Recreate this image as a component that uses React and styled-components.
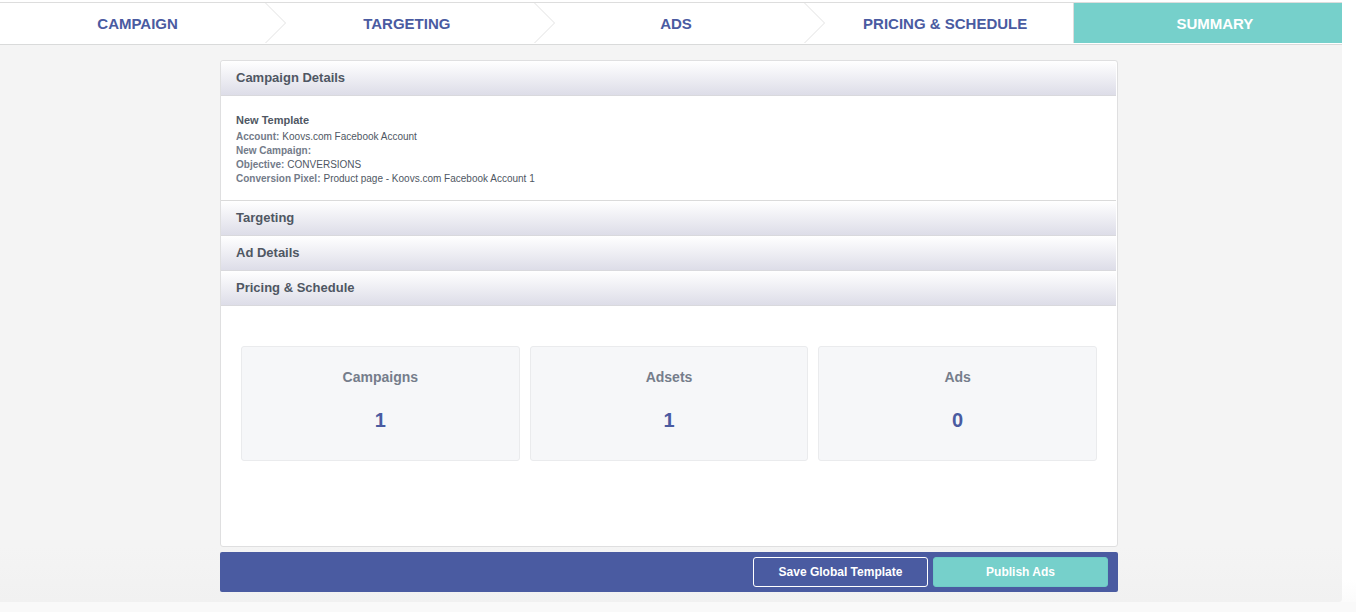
import React from "react";
import styled, { createGlobalStyle } from "styled-components";

const GlobalStyle = createGlobalStyle`
  * { box-sizing: border-box; }
  body {
    margin: 0;
    background: linear-gradient(#ffffff 0, #ffffff 580px, #f9f9f9 612px) no-repeat #f9f9f9;
    font-family: "Liberation Sans", Arial, Helvetica, sans-serif;
    color: #4f5763;
  }
  h2, h3, p, dl, dt, dd, ol { margin: 0; padding: 0; }
`;

const Page = styled.div`
  margin-right: 14px;
  padding-top: 2px;
  overflow: hidden;
`;

const StepBar = styled.nav`
  border-top: 1px solid #dddddd;
  border-bottom: 1px solid #d9dada;
  background: #ffffff;
  overflow: hidden;
`;

const StepList = styled.ol`
  display: grid;
  grid-template-columns: repeat(5, 1fr);
  margin: 0 0 1px -4px;
  list-style: none;
`;

const Step = styled.li`
  position: relative;
  height: 40px;
  border-left: ${(p) => (p.$active ? "1px solid #dddddd" : "0")};
  background: ${(p) => (p.$active ? "#76d0cb" : "#ffffff")};
`;

const StepLink = styled.a`
  display: block;
  padding-left: 14px;
  line-height: 41px;
  font-size: 15px;
  font-weight: bold;
  text-align: center;
  text-decoration: none;
  text-transform: uppercase;
  color: ${(p) => (p.$active ? "#ffffff" : "#4a5ba1")};
`;

const Chevron = styled.svg`
  position: absolute;
  left: 0;
  top: 0;
  width: 22px;
  height: 40px;
  fill: none;
  stroke: #e2e2e2;
`;

const Stage = styled.main`
  padding: 15px 4px 10px 0;
  background: linear-gradient(#f4f4f4 90%, #f1f1f1);
  border-bottom-right-radius: 3px;
`;

const Content = styled.div`
  max-width: 898px;
  margin: 0 auto;
`;

const Card = styled.section`
  padding-right: 1px;
  border: 1px solid #dfdfe0;
  border-radius: 3px;
  background: #ffffff;
`;

const SectionTitle = styled.h2`
  height: 35px;
  padding: 0 15px;
  border-bottom: 1px solid #d9d9dd;
  border-radius: ${(p) => (p.$first ? "3px 3px 0 0" : "0")};
  background: linear-gradient(#ffffff, #dddde8);
  font-size: 13px;
  line-height: 34px;
  color: #4f5763;
`;

const Details = styled.div`
  padding: 14px 15px;
  border-bottom: 1px solid #dadada;
`;

const TemplateName = styled.h3`
  font-size: 11px;
  line-height: 20px;
`;

const DetailRow = styled.div`
  display: flex;
  gap: 3px;
  font-size: 10px;
  line-height: 14px;
`;

const Term = styled.dt`
  font-weight: bold;
  color: #737b89;
`;

const Stats = styled.div`
  display: grid;
  grid-template-columns: repeat(3, 1fr);
  gap: 10px;
  padding: 40px 19px 85px 20px;
`;

const Stat = styled.div`
  height: 115px;
  padding-top: 20px;
  border: 1px solid #eaebed;
  border-radius: 3px;
  background: #f6f7f9;
  text-align: center;
  font-weight: bold;
`;

const StatLabel = styled.h3`
  font-size: 14px;
  line-height: 20px;
  color: #757d8b;
`;

const StatValue = styled.p`
  padding-top: 21px;
  font-size: 20px;
  line-height: 24px;
  color: #4a5ba1;
`;

const ActionBar = styled.footer`
  display: flex;
  justify-content: flex-end;
  gap: 5px;
  margin-top: 5px;
  padding: 5px 10px;
  border-radius: 2px;
  background: #4a5ba1;
`;

const Button = styled.button`
  width: 175px;
  height: 30px;
  padding: 0;
  border: 1px solid ${(p) => (p.$primary ? "#6fccc6" : "#ffffff")};
  border-radius: 3px;
  background: ${(p) => (p.$primary ? "#76d0cb" : "transparent")};
  font-family: inherit;
  font-size: 12px;
  font-weight: bold;
  color: #ffffff;
`;

const steps = ["Campaign", "Targeting", "Ads", "Pricing & Schedule", "Summary"];

const details = [
  ["Account:", "Koovs.com Facebook Account"],
  ["New Campaign:", ""],
  ["Objective:", "CONVERSIONS"],
  ["Conversion Pixel:", "Product page - Koovs.com Facebook Account 1"],
];

const stats = [
  ["Campaigns", 1],
  ["Adsets", 1],
  ["Ads", 0],
];

export default function App() {
  return (
    <>
      <GlobalStyle />
      <Page>
        <StepBar>
          <StepList>
            {steps.map((name, i) => {
              const active = i === steps.length - 1;
              return (
                <Step key={name} $active={active}>
                  {i > 0 && !active && (
                    <Chevron viewBox="0 0 22 40" aria-hidden="true">
                      <path d="M0.5 0L20.5 20L0.5 40" />
                    </Chevron>
                  )}
                  <StepLink href="#" $active={active}>{name}</StepLink>
                </Step>
              );
            })}
          </StepList>
        </StepBar>
        <Stage>
          <Content>
            <Card>
              <SectionTitle $first>Campaign Details</SectionTitle>
              <Details>
                <TemplateName>New Template</TemplateName>
                <dl>
                  {details.map(([term, value]) => (
                    <DetailRow key={term}>
                      <Term>{term}</Term>
                      <dd>{value}</dd>
                    </DetailRow>
                  ))}
                </dl>
              </Details>
              <SectionTitle>Targeting</SectionTitle>
              <SectionTitle>Ad Details</SectionTitle>
              <SectionTitle>Pricing &amp; Schedule</SectionTitle>
              <Stats>
                {stats.map(([label, value]) => (
                  <Stat key={label}>
                    <StatLabel>{label}</StatLabel>
                    <StatValue>{value}</StatValue>
                  </Stat>
                ))}
              </Stats>
            </Card>
            <ActionBar>
              <Button type="button">Save Global Template</Button>
              <Button type="button" $primary>Publish Ads</Button>
            </ActionBar>
          </Content>
        </Stage>
      </Page>
    </>
  );
}
